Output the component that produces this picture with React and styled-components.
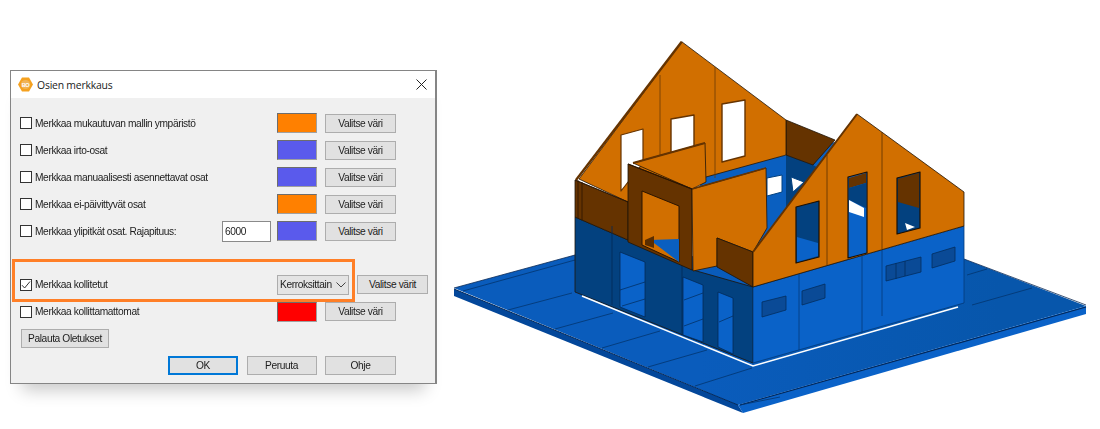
import React from 'react'
import styled, { createGlobalStyle } from 'styled-components'

const GlobalStyle = createGlobalStyle`
  html, body { margin: 0; padding: 0; background: #fff; }
  body { font-family: "Liberation Sans", Arial, sans-serif; }
`

const Page = styled.div`
  display: flex;
  align-items: flex-start;
  width: 1100px;
  height: 429px;
  overflow: hidden;
  background: #fff;
`
const DialogColumn = styled.div`
  padding: 70px 0 0 10px;
  width: 427px;
  flex: none;
`
const Dialog = styled.div`
  box-sizing: border-box;
  width: 427px;
  height: 313.5px;
  background: #f0f0f0;
  border: 1px solid #858585;
  border-right-width: 2px;
  box-shadow: 0 18px 16px -12px rgba(0, 0, 0, 0.22);
  color: #1c1c1c;
  font-size: 10.2px;
  letter-spacing: -0.38px;
  filter: blur(0.35px);
`
const TitleBar = styled.div`
  display: flex;
  align-items: center;
  height: 27px;
  padding: 0 8px 0 7px;
  background: #fff;
  color: #222;
`
const TitleText = styled.span`
  margin-left: 4px;
  flex: 1;
  font-family: "Open Sans", sans-serif;
  font-size: 10.4px;
  letter-spacing: -0.2px;
`
const Body = styled.div`
  padding: 12px 7px 0 9px;
`
const Row = styled.div`
  position: relative;
  display: flex;
  align-items: center;
  width: ${p => (p.$wide ? 408 : 376)}px;
  height: 26.9px;
  margin-top: ${p => p.$gap || 0}px;
`
const Box = styled.span`
  box-sizing: border-box;
  display: flex;
  align-items: center;
  justify-content: center;
  width: 12px;
  height: 12px;
  margin-right: 3px;
  flex: none;
  background: #fff;
  border: 1px solid #333;
`
const Label = styled.span`
  flex: 1;
  white-space: nowrap;
`
const Swatch = styled.span`
  box-sizing: border-box;
  width: 40px;
  height: 20px;
  margin-right: 8px;
  flex: none;
  background: ${p => p.$color};
  border: 1px solid #a0a0a0;
  border-top-color: #6d6d6d;
  border-left-color: #6d6d6d;
`
const Btn = styled.button`
  box-sizing: border-box;
  width: ${p => p.$w || 71}px;
  height: 19px;
  padding: 0;
  flex: none;
  background: #e1e1e1;
  border: 1px solid ${p => (p.$primary ? '#0078d7' : '#adadad')};
  outline: ${p => (p.$primary ? '1px solid #0078d7' : 'none')};
  outline-offset: -2px;
  color: #1c1c1c;
  font: inherit;
  letter-spacing: inherit;
`
const NumberField = styled.input`
  box-sizing: border-box;
  width: 49px;
  height: 21px;
  margin-right: 6px;
  padding: 0 2px;
  flex: none;
  background: #fff;
  border: 1px solid #8a8a8a;
  color: #1c1c1c;
  font: inherit;
  letter-spacing: inherit;
`
const Select = styled.div`
  box-sizing: border-box;
  display: flex;
  align-items: center;
  justify-content: space-between;
  width: 72px;
  height: 20px;
  margin-right: 8px;
  padding: 0 2px;
  flex: none;
  background: #e4e4e4;
  border: 1px solid #adadad;
  white-space: nowrap;
`
const Highlight = styled.div`
  position: absolute;
  left: -8px;
  top: -12px;
  box-sizing: border-box;
  width: 343px;
  height: 43px;
  border: 3px solid #ff7f27;
  pointer-events: none;
`
const ResetRow = styled.div`
  margin-top: 3.5px;
  padding-left: 1px;
`
const Footer = styled.div`
  display: flex;
  justify-content: flex-start;
  gap: 8.5px;
  width: 376px;
  margin-top: 8.5px;
  padding-left: 148px;
  box-sizing: border-box;
`
const House = styled.svg`
  display: block;
  flex: none;
  width: 650px;
  height: 399px;
  margin: 30px 0 0 13px;
  filter: blur(0.3px);
`

const ORANGE = '#d16f00'
const BROWN = '#653300'
const DARK = '#03417f'
const BLUE = '#0a62c8'
const LINE = '#1f1408'

const Logo = () => (
  <svg width="15" height="15" viewBox="0 0 15 15">
    <polygon points="4,0.5 11,0.5 15,7.5 11,14.5 4,14.5 0,7.5" fill="#f5a11f" />
    <circle cx="7.5" cy="7.5" r="4.6" fill="#f0b45a" />
    <text x="7.5" y="9.6" textAnchor="middle" fontSize="5.6" fontWeight="700" fill="#fff" fontFamily="Liberation Sans">BO</text>
  </svg>
)

const CloseIcon = () => (
  <svg width="11" height="11" viewBox="0 0 11 11">
    <path d="M0.5 0.5L10.5 10.5M10.5 0.5L0.5 10.5" stroke="#222" strokeWidth="1" fill="none" />
  </svg>
)

const Tick = () => (
  <svg width="10" height="10" viewBox="0 0 10 10">
    <path d="M1 5.2L3.6 8L9 1.5" stroke="#333" strokeWidth="1" fill="none" />
  </svg>
)

const Chevron = () => (
  <svg width="10" height="6" viewBox="0 0 10 6">
    <path d="M0.5 0.5L5 5L9.5 0.5" stroke="#444" strokeWidth="1" fill="none" />
  </svg>
)

const Poly = ({ p, f, s = LINE, w = 0.8 }) => (
  <polygon points={p} fill={f} stroke={s} strokeWidth={w} strokeLinejoin="round" />
)
const Line = ({ d, s = LINE, w = 0.8 }) => <path d={d} stroke={s} strokeWidth={w} fill="none" />

const seams = [
  'M508 310L572 293',
  'M555 329L613 313',
  'M602 348L660 331',
  'M648 367L707 350',
  'M695 386L752 368',
  'M463 291L575 260',
  'M740 405L780 397',
  'M967 275L987 269',
  'M972 305L1032 288'
]

const wallWindows = [
  '886,266 921,257 921,272 886,281',
  '932,254 955,247 955,261 932,268',
  '802,291 825,284 825,298 802,305',
  '762,302 786,296 786,310 762,317'
]

const HouseDrawing = () => (
  <House viewBox="450 30 650 399">
    <defs>
      <linearGradient id="slabFill" gradientUnits="userSpaceOnUse" x1="700" y1="0" x2="1000" y2="0">
        <stop offset="0" stopColor="#0a5cbc" />
        <stop offset="1" stopColor="#0756ab" />
      </linearGradient>
    </defs>

    {/* base slab */}
    <polygon points="454,288 575,255 964,259 1086,306 738,405" fill="url(#slabFill)" />
    <Line d="M454 288L575 255M964 259L1086 305" s="#0b2a55" />
    <polygon points="454,289 738,405 743,413 454,296" fill="#03479a" />
    <polygon points="738,405 1086,306 1086,314 743,413" fill={BLUE} />
    <Line d="M454 289L738 405" s="#02285a" w={1} />
    <Line d="M740 405L1086 307" s="#02285a" w={1.2} />
    {seams.map(d => <Line key={d} d={d} s="#03356f" />)}

    {/* back walls */}
    <polygon points="700,175 786,155 842,140 750,258 700,240" fill="#0a5fc0" />
    <polygon points="786,155 813,165 822,170 786,212" fill={DARK} />
    <polygon points="767,178 782,175 782,192 767,196" fill="#fff" stroke={DARK} />
    <polygon points="791,177 804,182 793,192" fill="#fff" stroke={DARK} />

    {/* main gable */}
    <Poly p="786,120 835,140 813,165 786,155" f={BROWN} />
    <Poly p="681.7,41.7 786,120 786,155 706,177 628,202 579,179" f={ORANGE} />
    <Line d="M681.7 41.7L576 180" s={BROWN} w={2.4} />
    <Line d="M660 75L660 160M715 67L715 178" s="#6b3a05" />
    <Poly p="621,135 643,129 643,163 621,191" f="#fff" s={BROWN} w={1.2} />
    <Poly p="671,119 694,115 694,148 671,155" f="#fff" s={BROWN} w={1.4} />
    <Poly p="722,104 745,100 745,156 722,162" f="#fff" s={BROWN} w={1.4} />

    {/* lower left wall */}
    <polygon points="575,217 628,240 693,270 753,287 753,363 575,292" fill={DARK} stroke={LINE} strokeWidth="0.8" />
    <Poly p="575,180 628,202 628,240 575,217" f={BROWN} />
    <Line d="M578 180L578 218M582 182L582 220M575 180L628 202" s="#2b1400" />
    <Line d="M612 226L612 305M682 265L682 335" s="#022a57" />
    <Poly p="620,252 645,262 645,317 620,307" f={BLUE} s="#022a57" />
    <Poly p="683,277 703,285 703,342 683,335" f={BLUE} s="#022a57" />
    <Poly p="718,292 733,298 733,354 718,347" f={BLUE} s="#022a57" />
    <Line d="M620 290L645 282M622 306L645 299M684 300L703 293M684 326L703 319M719 322L733 316" s="#022a57" w={0.7} />

    {/* front box */}
    <Poly p="633,163 705,143 706,182 692,189" f={ORANGE} />
    <Line d="M633 163L705 143" s={BROWN} w={2} />
    <Poly p="628,164 692,189 692,270 628,242" f={BROWN} />
    <polygon points="642,191 679,206 679,262 642,245" fill={ORANGE} stroke="#2b1400" strokeWidth="1" />
    <polygon points="650,240 679,239 679,262" fill="#0a5fc0" />
    <polygon points="645,240 654,236 654,248 645,245" fill="#5a2d00" />
    <Line d="M628 164L692 189" s="#2b1400" w={1.2} />
    <Poly p="692,189 766,168 767,228 753,252 717,238 717,266 693,271" f={ORANGE} />
    <Line d="M692 189L766 168" s={BROWN} w={1.6} />
    <Poly p="717,238 753,252 753,287 717,267" f={BROWN} />

    {/* right gable and wall */}
    <Poly p="753,287 964,226 964,303 753,363" f={BLUE} s="#033a78" />
    <Poly p="857,114 964,192 964,226 753,287 753,252" f={ORANGE} />
    <Line d="M857 114L753 252" s={BROWN} w={2} />
    <Line d="M827 155L827 265M882 132L882 249" s="#5a3000" />
    <Line d="M799 274L799 350M862 256L862 333M882 250L882 316" s="#033a78" />
    {wallWindows.map(p => <Poly key={p} p={p} f="#0a4a96" s="#032d5e" />)}
    <Line d="M896 263L896 279M905 261L905 276" s="#032d5e" />

    <Poly p="796,207 819,201 819,257 796,263" f={DARK} s="#1c0f02" w={1.2} />
    <polygon points="797,237 818,243 818,256 797,262" fill={BLUE} />
    <Poly p="848,177 867,172 867,253 848,258" f={BLUE} s="#1c0f02" w={1.2} />
    <polygon points="849,178 866,173 866,183 849,188" fill={BROWN} />
    <polygon points="849,188 866,183 866,208 849,200" fill={DARK} />
    <polygon points="849,200 864,208 864,217 849,212" fill="#fff" />
    <Poly p="897,178 920,172 920,228 897,234" f={DARK} s="#1c0f02" w={1.2} />
    <polygon points="898,179 919,173 919,208 898,202" fill={BROWN} />
    <polygon points="905,223 915,227 907,230" fill="#fff" />

    {/* gap under the walls */}
    <Line d="M582 296L753 366L958 307" s="#fff" w={1.6} />
  </House>
)

const colorRows = [
  { label: 'Merkkaa mukautuvan mallin ympäristö', color: '#ff8000' },
  { label: 'Merkkaa irto-osat', color: '#5a5aec' },
  { label: 'Merkkaa manuaalisesti asennettavat osat', color: '#5a5aec' },
  { label: 'Merkkaa ei-päivittyvät osat', color: '#ff8000' },
  { label: 'Merkkaa ylipitkät osat. Rajapituus:', color: '#5a5aec', limit: '6000' }
]

export default function App() {
  return (
    <Page>
      <GlobalStyle />
      <DialogColumn>
        <Dialog>
          <TitleBar>
            <Logo />
            <TitleText>Osien merkkaus</TitleText>
            <CloseIcon />
          </TitleBar>
          <Body>
            {colorRows.map(row => (
              <Row key={row.label}>
                <Box />
                <Label>{row.label}</Label>
                {row.limit && <NumberField defaultValue={row.limit} />}
                <Swatch $color={row.color} />
                <Btn>Valitse väri</Btn>
              </Row>
            ))}
            <Row $wide $gap={27}>
              <Highlight />
              <Box><Tick /></Box>
              <Label>Merkkaa kollitetut</Label>
              <Select>
                Kerroksittain
                <Chevron />
              </Select>
              <Btn>Valitse värit</Btn>
            </Row>
            <Row>
              <Box />
              <Label>Merkkaa kollittamattomat</Label>
              <Swatch $color="#ff0000" />
              <Btn>Valitse väri</Btn>
            </Row>
            <ResetRow>
              <Btn $w={88}>Palauta Oletukset</Btn>
            </ResetRow>
            <Footer>
              <Btn $w={70} $primary>OK</Btn>
              <Btn $w={70}>Peruuta</Btn>
              <Btn $w={71}>Ohje</Btn>
            </Footer>
          </Body>
        </Dialog>
      </DialogColumn>
      <HouseDrawing />
    </Page>
  )
}
